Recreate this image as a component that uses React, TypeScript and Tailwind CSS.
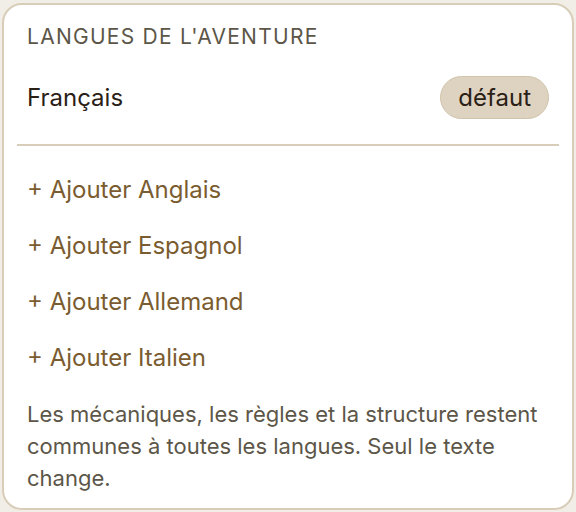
import React from 'react';

const languages = ['Anglais', 'Espagnol', 'Allemand', 'Italien'];

const App: React.FC = () => {
  return (
    <div className="w-[576px] h-[512px] bg-[#f1eee8] overflow-hidden" style={{ fontFamily: 'Inter, "Noto Sans", sans-serif' }}>
      <div className="ml-[2px] mt-[3px] w-[572px] h-[507px] bg-white border-2 border-[#d8cdb8] rounded-[20px] px-[23px] pt-[19px] pb-[14px] flex flex-col">
        {/* Title */}
        <h2 className="h-[26px] leading-[26px] text-[21px] tracking-[0.06em] uppercase text-[#5c5648] whitespace-nowrap">
          Langues de l'aventure
        </h2>

        {/* Default language */}
        <div className="mt-[26px] h-[43px] flex items-center justify-between">
          <span className="text-[24px] text-[#2a2016]">Français</span>
          <span className="h-[43px] px-[17px] flex items-center rounded-full bg-[#ded3c1] border border-[#cfc3aa] text-[24px] text-[#2a2016]">
            défaut
          </span>
        </div>

        <div className="mt-[25px] -mx-[10px] h-[2px] bg-[#d8cdb8]" />

        {/* Add languages */}
        <div className="mt-[16px] flex flex-col">
          {languages.map((lang) => (
            <button
              key={lang}
              className="h-[56px] flex items-center text-left text-[24px] text-[#7a5c30] whitespace-nowrap"
            >
              + Ajouter {lang}
            </button>
          ))}
        </div>

        <p className="mt-[12px] text-[22px] leading-[32px] text-[#5c5648]">
          Les mécaniques, les règles et la structure restent communes à toutes les langues. Seul le texte change.
        </p>
      </div>
    </div>
  );
};

export default App;
